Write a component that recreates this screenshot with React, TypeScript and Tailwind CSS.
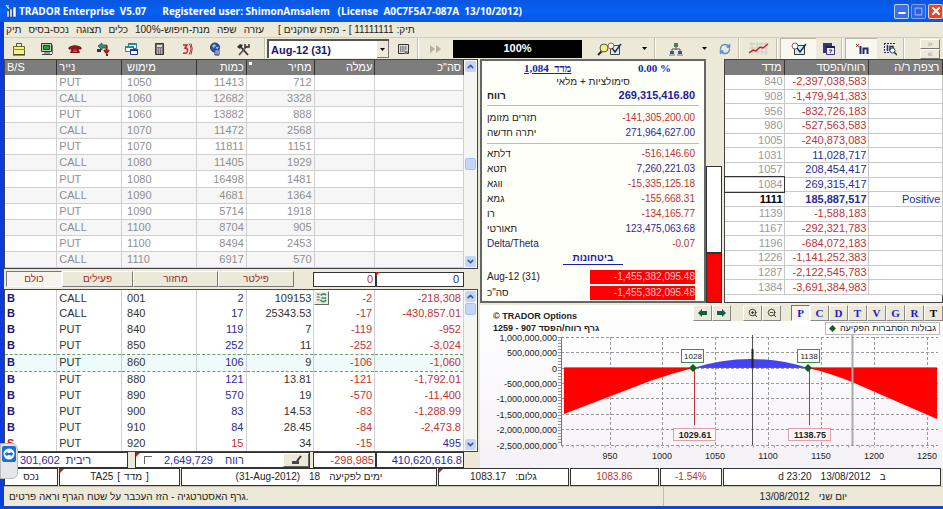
import { useState, type ReactNode } from "react";
import { Minus, Square, X, ZoomIn, ZoomOut, RefreshCw, ChevronUp, ChevronDown } from "lucide-react";

const chain = [
  ["PUT", "1050", "11413", "712"],
  ["CALL", "1060", "12682", "3328"],
  ["PUT", "1060", "13882", "888"],
  ["CALL", "1070", "11472", "2568"],
  ["PUT", "1070", "11811", "1151"],
  ["CALL", "1080", "11405", "1929"],
  ["PUT", "1080", "16498", "1481"],
  ["CALL", "1090", "4681", "1364"],
  ["PUT", "1090", "5714", "1918"],
  ["CALL", "1100", "8704", "905"],
  ["PUT", "1100", "8494", "2453"],
  ["CALL", "1110", "6917", "570"],
];

const positions = [
  ["B", "CALL", "001", "2", "109153", "-2", "-218,308"],
  ["B", "CALL", "840", "17", "25343.53", "-17", "-430,857.01"],
  ["B", "PUT", "840", "119", "7", "-119", "-952"],
  ["B", "PUT", "850", "252", "11", "-252", "-3,024"],
  ["B", "PUT", "860", "106", "9", "-106", "-1,060"],
  ["B", "PUT", "880", "121", "13.81", "-121", "-1,792.01"],
  ["B", "PUT", "890", "570", "19", "-570", "-11,400"],
  ["B", "PUT", "900", "83", "14.53", "-83", "-1,288.99"],
  ["B", "PUT", "910", "84", "28.45", "-84", "-2,473.8"],
  ["S", "PUT", "920", "15", "34", "-15", "495"],
];

const profit = [
  ["840", "-2,397,038,583"],
  ["908", "-1,479,941,383"],
  ["956", "-832,726,183"],
  ["980", "-527,563,583"],
  ["1005", "-240,873,083"],
  ["1031", "11,028,717"],
  ["1057", "208,454,417"],
  ["1084", "269,315,417"],
  ["1111", "185,887,517"],
  ["1139", "-1,588,183"],
  ["1167", "-292,321,783"],
  ["1196", "-684,072,183"],
  ["1226", "-1,141,252,383"],
  ["1287", "-2,122,545,783"],
  ["1384", "-3,691,384,983"],
];

const greeks = [
  ["דלתא", "-516,146.60"],
  ["תטא", "7,260,221.03"],
  ["ווגא", "-15,335,125.18"],
  ["גמא", "-155,668.31"],
  ["רו", "-134,165.77"],
  ["תאורטי", "123,475,063.68"],
  ["Delta/Theta", "-0.07"],
];

const menu = ["תיק", "נכס-בסיס", "תצוגה", "כלים", "מנת-חיפוש-100%", "שפה", "עזרה"];
const tabs = [
  { name: "כולם", width: "w-[56px]" },
  { name: "פעילים", width: "w-[71px]" },
  { name: "מחזור", width: "w-[85px]" },
  { name: "פילטר", width: "w-[76px]" },
];
const modes = ["P", "C", "D", "T", "V", "G", "R", "T"];

const tone = (value: string) => (value.startsWith("-") ? "text-[#c03434]" : "text-[#2a2a98]");

function Icon({ children, wide }: { children: ReactNode; wide?: boolean }) {
  return (
    <svg className={wide ? "h-[14px] w-[26px]" : "h-[14px] w-[14px]"} viewBox={wide ? "0 0 26 14" : "0 0 14 14"} fill="none" aria-hidden="true">
      {children}
    </svg>
  );
}

const tools = [
  {
    label: "Portfolio",
    art: (
      <>
        <path d="M4.500 4V1.500h5V4" stroke="#55551a" />
        <path d="M1.500 4.500h11v8h-11z" fill="#f4f08a" stroke="#66661e" />
        <path d="M1 7.500h12" stroke="#8c8a28" />
        <path d="M1 13h12" stroke="#333" />
      </>
    ),
  },
  {
    label: "Monitor",
    art: (
      <>
        <path d="M1.500 1.500h10v8h-10z" fill="#c6cbb8" stroke="#333" />
        <path d="M3.500 3.500h6v4h-6z" fill="#1fa53c" stroke="#174d22" />
        <path d="M4 11h6M2 12.500h10" stroke="#444" />
        <path d="M12.500 3v9" stroke="#777" />
      </>
    ),
  },
  {
    label: "Phone",
    art: (
      <>
        <path d="M1 7V5.500Q7 2 13 5.500V7h-3V6H4v1z" fill="#b81818" stroke="#6c0c0c" />
        <path d="M4 6h6l2 5H2z" fill="#8c1616" />
        <path d="M5.500 8h3M5 9.500h4" stroke="#c96060" />
      </>
    ),
  },
  {
    label: "Transfer",
    art: (
      <>
        <path d="M2 4l4-3v2h5v3H6v2z" fill="#2f9a86" stroke="#173f39" strokeWidth=".7" />
        <path d="M10.500 4v6M8 8l2.500 3L13 8" stroke="#a51c1c" strokeWidth="2" />
        <path d="M1 7h4v3H1z" fill="#333" />
        <path d="M10 12h2v2h-2z" fill="#333" />
      </>
    ),
  },
  {
    label: "Windows",
    art: (
      <>
        <path d="M4.500 1.500h8v5h-8z" fill="#fff" stroke="#258a9e" />
        <path d="M4 1h9v2H4z" fill="#258a9e" />
        <path d="M1.500 4.500h8v5h-8z" fill="#fff" stroke="#258a9e" />
        <path d="M1 4h9v2H1z" fill="#258a9e" />
        <path d="M6.500 7.500h7v5h-7z" fill="#fff" stroke="#22399c" />
        <path d="M6 7h8v2H6z" fill="#22399c" />
      </>
    ),
  },
  {
    label: "Calculator",
    art: (
      <>
        <path d="M3.500 1.500h8v11h-8z" fill="#777" stroke="#333" />
        <path d="M5 3h5v2H5z" fill="#ddd" />
        <path d="M5 7h5M5 9h5M5 11h5" stroke="#eee" strokeDasharray="1 1" />
      </>
    ),
  },
  {
    label: "Quotes",
    art: (
      <>
        <path d="M3 3h4L5 6q3 0 2.500 3T3 11" stroke="#cc2222" strokeWidth="1.500" />
        <path d="M9 1.500q4 5 0 11M11 1.500q2.500 5 0 11" stroke="#b32c2c" />
      </>
    ),
  },
  {
    label: "Internet",
    art: (
      <>
        <circle cx="7" cy="5.500" r="4.500" fill="#2d55b5" stroke="#1a2f66" />
        <path d="M4 4q2-3 4-1L6 6zM8 5h3L9 8z" fill="#9bd0a0" />
        <path d="M7 8h4v5H7z" fill="#fff" stroke="#2b2b77" />
        <path d="M9 9v4" stroke="#2b2b77" />
      </>
    ),
  },
  {
    label: "Settings",
    art: (
      <>
        <path d="M4 4l8 9" stroke="#333" strokeWidth="1.800" />
        <path d="M11 4l-8 9" stroke="#555" strokeWidth="1.800" />
        <path d="M1 5l3-3 3 1-3 4z" fill="#333" />
        <path d="M9 2v3h4V2" stroke="#333" strokeWidth="1.500" />
      </>
    ),
  },
];

function ToolButton({ label, children, className = "w-7" }: { label: string; children: ReactNode; className?: string }) {
  return (
    <button aria-label={label} className={`flex h-full shrink-0 items-center justify-center ${className}`}>
      {children}
    </button>
  );
}

function Separator() {
  return <div className="h-full w-[2px] shrink-0 border-l border-[#c3bfae] bg-white" />;
}

function Caret() {
  return (
    <svg className="h-[3px] w-[5px]" viewBox="0 0 5 3" aria-hidden="true">
      <path d="M0 0h5L2.500 3z" fill="#000" />
    </svg>
  );
}

function ScrollBar({ thumb }: { thumb: string }) {
  return (
    <div className="flex w-[13px] shrink-0 flex-col items-center bg-[#f5f5f2] py-px">
      <button aria-label="Scroll up" className="flex h-[11px] w-[11px] items-center justify-center rounded-xs bg-[#c3d5fd]">
        <ChevronUp size={9} strokeWidth={4} color="#3d5794" />
      </button>
      <div className={thumb} />
      <div className="h-[12px] w-[11px] rounded-xs border border-[#a9c1f3] bg-[#c3d5fd]" />
      <div className="flex-1" />
      <button aria-label="Scroll down" className="flex h-[11px] w-[11px] items-center justify-center rounded-xs bg-[#c3d5fd]">
        <ChevronDown size={9} strokeWidth={4} color="#3d5794" />
      </button>
    </div>
  );
}

function LeftColumns() {
  return (
    <colgroup>
      <col className="w-[52px]" />
      <col className="w-[65px]" />
      <col className="w-[75px]" />
      <col className="w-[50px]" />
      <col className="w-[68px]" />
      <col className="w-[61px]" />
      <col className="w-[89px]" />
    </colgroup>
  );
}

function Corner() {
  return <span className="absolute left-0 top-0 border-2 border-b-transparent border-l-[#c22] border-r-transparent border-t-[#c22]" />;
}

function TitleBar() {
  return (
    <header className="flex h-[22px] shrink-0 items-center bg-gradient-to-b from-[#0a56e0] via-[#0560f5] to-[#0458e8] pl-[5px] text-white">
      <svg className="h-[14px] w-[12px]" viewBox="0 0 12 14" aria-hidden="true">
        <path d="M1 1l3 4M3 1v3" stroke="#ff8" />
        <path d="M2 13V7h2v6zM5 13V5h2v8zM8 13V3h3v10z" fill="#fff" stroke="#335" strokeWidth=".5" />
      </svg>
      <h1 className="flex gap-4 whitespace-pre pl-[2px] font-['Open_Sans',sans-serif] text-[10px] font-bold">
        <span>TRADOR Enterprise  V5.07</span>
        <span>Registered user: ShimonAmsalem   (License  A0C7F5A7-087A  13/10/2012)</span>
      </h1>
      <div className="ml-auto flex gap-[2px]">
        <button aria-label="Minimize" className="flex h-[15px] w-[15px] items-end justify-center rounded-xs border border-white/70 bg-[#3a6df0]">
          <Minus size={10} strokeWidth={5} />
        </button>
        <button aria-label="Maximize" className="flex h-[15px] w-[15px] items-center justify-center rounded-xs border border-white/40 bg-[#2a62e8] text-white/50">
          <Square size={9} strokeWidth={3} />
        </button>
        <button aria-label="Close" className="flex h-[15px] w-[15px] items-center justify-center rounded-xs border border-white/70 bg-[#e0492a]">
          <X size={12} strokeWidth={4} />
        </button>
      </div>
    </header>
  );
}

function Toolbar() {
  return (
    <div className="flex h-[22px] shrink-0 items-center border-t border-[#d0ccbb] pl-px">
      {tools.map((tool) => (
        <ToolButton key={tool.label} label={tool.label}>
          <Icon>{tool.art}</Icon>
        </ToolButton>
      ))}
      <div className="w-[7px]" />
      <Separator />
      <div className="relative ml-px h-[19px] w-[122px] shrink-0 border-l-2 border-t-2 border-[#555] bg-white">
        <select aria-label="Expiry" className="block h-full w-full appearance-none pl-[2px] text-[11px] font-bold leading-[16px] text-[#16166e] outline-none">
          <option>Aug-12 (31)</option>
          <option>Sep-12 (28)</option>
        </select>
        <span className="pointer-events-none absolute right-0 top-0 flex h-full w-[12px] items-center justify-center border-b border-r border-[#777] bg-[#ece9d8]">
          <Caret />
        </span>
      </div>
      <ToolButton label="Calendar">
        <Icon>
          <path d="M2.500 2.500h10v9h-10z" fill="#ddd" stroke="#333" />
          <path d="M4 5h7M4 7h7M4 9h5" stroke="#333" strokeDasharray="1.500 .7" />
          <path d="M9 9h3l-1 3H8z" fill="#876" />
        </Icon>
      </ToolButton>
      <Separator />
      <ToolButton label="Run" className="w-[31px]">
        <Icon>
          <path d="M2 3l5 4-5 4zM8 3l5 4-5 4z" fill="#b4b09f" />
        </Icon>
      </ToolButton>
      <div className="mx-[3px] flex h-[18px] min-w-0 flex-1 items-center justify-center bg-black text-[11px] font-bold text-white">100%</div>
      <ToolButton label="Find orders" className="w-[50px]">
        <Icon wide>
          <path d="M1 13l4-4" stroke="#222" strokeWidth="2" />
          <circle cx="7" cy="6" r="4" fill="#f5ee78" stroke="#555" />
          <path d="M13.500 3.500h9v9h-9z" fill="#d8f0ef" stroke="#444" />
          <circle cx="14" cy="4" r="3" fill="#fff" stroke="#b55" />
          <path d="M15 6l3 4 6-8" stroke="#1c2f4a" strokeWidth="1.500" />
        </Icon>
      </ToolButton>
      <ToolButton label="Find options" className="w-[19px]"><Caret /></ToolButton>
      <Separator />
      <ToolButton label="Network" className="w-[40px]">
        <Icon>
          <path d="M5 1h4v4H5z" fill="#575" />
          <path d="M7 5v3M3 9V7h8v2" stroke="#555" />
          <path d="M1 9h4v3H1zM9 9h4v3H9z" fill="#35549d" />
          <path d="M0 13h6M8 13h6" stroke="#777" />
        </Icon>
      </ToolButton>
      <ToolButton label="Network options" className="w-[16px]"><Caret /></ToolButton>
      <ToolButton label="Refresh" className="w-[26px]">
        <RefreshCw size={12} strokeWidth={3} color="#5c8bd0" />
      </ToolButton>
      <Separator />
      <ToolButton label="Chart" className="w-[36px]">
        <Icon wide>
          <path d="M4 2h19M4 6h19M4 10h19M7 0v13M12 0v13M17 0v13M21 0v13" stroke="#ccc9c4" />
          <path d="M4 11l4-3 3 1 4-4 3 1 5-4" stroke="#c11f2c" strokeWidth="1.500" />
        </Icon>
      </ToolButton>
      <Separator />
      <ToolButton label="Orders" className="ml-[2px] w-[36px] border-l border-t border-[#b9b5a5] bg-[#f8f7f1]">
        <Icon wide>
          <path d="M8.500 3.500h10v9h-10z" fill="#d8f0ef" stroke="#333" />
          <circle cx="9" cy="4" r="3" fill="#fff" stroke="#956" />
          <path d="M11 6l3 4 6-8" stroke="#1c2f4a" strokeWidth="1.500" />
        </Icon>
      </ToolButton>
      <ToolButton label="Copy window" className="w-[25px]">
        <Icon>
          <path d="M1 1h9v10H1z" fill="#353577" />
          <path d="M4.500 4.500h8v8h-8z" fill="#eef" stroke="#353577" />
          <path d="M4 4h9v2H4z" fill="#20204f" />
          <path d="M7 8h3l-2 3" stroke="#353577" />
        </Icon>
      </ToolButton>
      <Separator />
      <ToolButton label="Logarithm" className="ml-[2px] w-[32px] border-l border-t border-[#b9b5a5] bg-[#f8f7f1]">
        <Icon>
          <path d="M1 2l3 3M4 2L1 5" stroke="#733" />
          <path d="M5.500 4v8M8.500 12V6.500h4V12" stroke="#27276e" strokeWidth="2" />
        </Icon>
      </ToolButton>
      <ToolButton label="Inspect" className="w-[26px]">
        <Icon>
          <path d="M1 1.500h11M1.500 1v9M1 10.500h6" stroke="#27276e" strokeDasharray="2 1" />
          <path d="M4.500 3v6M7 9V4.500h3V7" stroke="#27276e" strokeWidth="1.500" />
          <circle cx="9.500" cy="8.500" r="2.500" fill="#dff" stroke="#444" />
          <path d="M11 10l3 3" stroke="#333" strokeWidth="1.500" />
        </Icon>
      </ToolButton>
      <Separator />
      <div className="ml-[15px] mr-[3px] flex shrink-0 flex-col">
        <button aria-label="More" className="h-[10px] w-[20px] border border-b-[#777] border-l-white border-r-[#777] border-t-white text-[9px] leading-[6px] text-[#999]">»</button>
        <button aria-label="Less" className="h-[10px] w-[20px] border border-b-[#777] border-l-white border-r-[#777] border-t-white text-[9px] leading-[6px] text-[#999]">«</button>
      </div>
    </div>
  );
}

function ChainTable() {
  return (
    <section className="flex min-h-0 flex-[211] border border-[#444] bg-white">
      <table className="h-full min-w-0 flex-1 table-fixed border-collapse text-[11px] leading-none text-[#8f8f8f]">
        <LeftColumns />
        <thead>
          <tr className="h-[15px] bg-[#7d7d7d] text-white [&>th]:border-r [&>th]:border-[#333] [&>th]:px-[2px] [&>th]:font-normal">
            <th className="text-left">B/S</th>
            <th className="text-left">נייר</th>
            <th className="pl-[5px]! text-left">מימוש</th>
            <th className="text-right">כמות</th>
            <th className="relative text-right">
              <span className="absolute left-[2px] top-[2px] h-[3px] w-[3px] bg-white" />
              מחיר
            </th>
            <th className="text-right">עמלה</th>
            <th className="text-right">סה"כ</th>
          </tr>
        </thead>
        <tbody>
          {chain.map(([type, strike, qty, price], i) => (
            <tr key={i} className="border-b border-[#cfcfcf] even:bg-[#f6f6f6] [&>td]:border-r [&>td]:border-[#cfcfcf] [&>td]:px-[2px]">
              <td />
              <td>{type}</td>
              <td className="pl-[5px]!">{strike}</td>
              <td className="text-right">{qty}</td>
              <td className="text-right">{price}</td>
              <td />
              <td />
            </tr>
          ))}
        </tbody>
      </table>
      <ScrollBar thumb="flex-[1]" />
    </section>
  );
}

function FilterBar() {
  const [active, setActive] = useState("כולם");
  return (
    <div className="flex h-[20px] shrink-0 items-center pl-[2px] pr-[14px]">
      {tabs.map((tab) => (
        <button
          key={tab.name}
          onClick={() => setActive(tab.name)}
          className={`h-[16px] border text-[10px] leading-none text-[#a02828] ${tab.width} ${
            tab.name === active
              ? "border-b-white border-l-[#777] border-r-white border-t-[#777] bg-[#f6f4ec]"
              : "border-b-[#777] border-l-white border-r-[#777] border-t-white"
          }`}
        >
          {tab.name}
        </button>
      ))}
      <input aria-label="Total commission" readOnly value="0" className="ml-auto h-[15px] w-[63px] border border-[#333] bg-white px-[2px] text-right text-[11px] leading-none text-[#c03434]" />
      <div className="relative">
        <Corner />
        <input aria-label="Total amount" readOnly value="0" className="block h-[15px] w-[88px] border border-[#333] bg-white px-[4px] text-right text-[11px] leading-none text-[#2a2a98]" />
      </div>
    </div>
  );
}

function PositionTable() {
  return (
    <section className="flex min-h-0 flex-[163] border border-[#444] bg-white">
      <table className="h-full min-w-0 flex-1 table-fixed border-collapse text-[11px] leading-none text-[#333]">
        <LeftColumns />
        <tbody>
          {positions.map(([side, type, strike, qty, price, fee, total], i) => (
            <tr
              key={i}
              className={`[&>td]:border-r [&>td]:border-[#cfcfcf] [&>td]:px-[2px] ${
                i === 4 ? "border-y border-dashed border-[#6f9a6f] bg-[#effafa]" : ""
              }`}
            >
              <td className={`font-bold ${side === "S" ? "text-[#d02020]" : "text-[#16167c]"}`}>{side}</td>
              <td>{type}</td>
              <td className="pl-[5px]!">{strike}</td>
              <td className={`text-right ${side === "S" ? "text-[#c03434]" : "text-[#2a2a98]"}`}>{qty}</td>
              <td className="relative text-right">
                {price}
                {i === 0 && (
                  <button aria-label="Edit price" className="absolute -right-[16px] top-px flex h-[14px] w-[15px] items-center justify-center border border-b-[#666] border-l-white border-r-[#666] border-t-white bg-[#ece9d8]">
                    <Icon>
                      <path d="M2 3h3M2 6h3M2 9h3" stroke="#555" />
                      <path d="M6 4q4-3 6 0M12 9q-3 4-6 0M7 7h5" stroke="#2a9478" strokeWidth="1.800" />
                    </Icon>
                  </button>
                )}
              </td>
              <td className={`text-right ${tone(fee)}`}>{fee}</td>
              <td className={`text-right ${tone(total)}`}>{total}</td>
            </tr>
          ))}
        </tbody>
      </table>
      <ScrollBar thumb="h-px" />
    </section>
  );
}

function TotalsBar() {
  return (
    <div className="flex h-[16px] shrink-0 items-stretch pr-[14px] text-[11px] leading-[14px] text-[#2a2a98] [&>div]:border [&>div]:border-[#333] [&>div]:bg-white">
      <div className="flex w-[124px] items-center gap-[6px] pl-[15px]">
        <span>301,602</span>
        <span>ריבית</span>
      </div>
      <div className="relative ml-[7px] flex min-w-0 flex-1 items-center pl-[8px]">
        <Corner />
        <input type="checkbox" aria-label="רווח" className="h-[8px] w-[8px] appearance-none border-l border-t border-[#666] bg-white" />
        <span className="ml-[12px]">2,649,729</span>
        <span className="ml-[12px]">רווח</span>
        <button aria-label="Edit" className="ml-auto flex h-full w-[26px] items-center justify-center border border-b-[#666] border-l-white border-r-[#666] border-t-white bg-[#ece9d8]">
          <Icon>
            <path d="M12 3L8 8" stroke="#333" strokeWidth="2" />
            <path d="M3 8h7v3H3z" fill="#445" />
          </Icon>
        </button>
      </div>
      <div className="ml-[3px] w-[63px] px-px text-right text-[#c03434]">-298,985</div>
      <div className="w-[88px] px-px text-right">410,620,616.8</div>
    </div>
  );
}

function Summary() {
  return (
    <section className="flex min-w-0 flex-[212] flex-col border-2 border-[#666] bg-[#fffffa] px-[5px] text-[10px] leading-[15px] text-[#222]">
      <div className="flex h-[14px] items-center justify-between pl-[37px] pr-[28px] font-['Liberation_Serif',serif] text-[11px] font-bold text-[#1c1ca8]">
        <a href="#index" className="whitespace-pre underline">
          1,084  <bdi>מדד</bdi>
        </a>
        <span>0.00 %</span>
      </div>
      <p className="text-center leading-[13px]" dir="rtl">סימולציות + מלאי</p>
      <div className="flex justify-between border-b border-[#bbb] pb-[2px] pr-[4px] font-bold">
        <span>רווח</span>
        <span className="text-[11px] text-[#1c1ca8]">269,315,416.80</span>
      </div>
      <div className="flex flex-col border-b border-[#bbb] pb-[3px] pr-[4px] pt-[4px]">
        <div className="flex justify-between">
          <span>תזרים מזומן</span>
          <span className="text-[#c03434]">-141,305,200.00</span>
        </div>
        <div className="flex justify-between">
          <span>יתרה חדשה</span>
          <span className="text-[#2a2a98]">271,964,627.00</span>
        </div>
      </div>
      <div className="flex flex-1 flex-col justify-around pr-[4px] pt-[2px]">
        {greeks.map(([name, value]) => (
          <div key={name} className="flex justify-between">
            <span className={name === "Delta/Theta" ? "text-[#22226a]" : ""}>{name}</span>
            <span className={tone(value)}>{value}</span>
          </div>
        ))}
      </div>
      <h2 className="mx-auto w-[60px] border-b border-[#1c1ca8] text-center font-bold leading-[13px] text-[#1c1ca8]">ביטחונות</h2>
      <div className="flex flex-col gap-px pb-[3px] pr-[4px] pt-[4px]">
        {["Aug-12 (31)", "סה\"כ"].map((name) => (
          <div key={name} className="flex items-center justify-between">
            <span>{name}</span>
            <span className="h-[14px] w-[105px] bg-[#f00] text-right leading-[14px] text-[#ffd0d0]">-1,455,382,095.48</span>
          </div>
        ))}
      </div>
    </section>
  );
}

function ProfitTable() {
  return (
    <section className="min-w-0 flex-[217] border border-[#444] bg-white pb-[7px]">
      <table className="h-full w-full table-fixed border-collapse text-[11px] leading-none">
        <colgroup>
          <col className="w-[59px]" />
          <col className="w-[84px]" />
          <col className="w-[74px]" />
        </colgroup>
        <thead>
          <tr className="h-[15px] bg-[#7d7d7d] text-white [&>th]:border-r [&>th]:border-[#333] [&>th]:px-[2px] [&>th]:text-right [&>th]:font-normal">
            <th>מדד</th>
            <th>רווח/הפסד</th>
            <th>רצפת ר/ה</th>
          </tr>
        </thead>
        <tbody>
          {profit.map(([index, value]) => (
            <tr key={index} className={`border-b border-[#c8c8c8] text-right [&>td]:border-r [&>td]:border-[#c8c8c8] [&>td]:px-px ${index === "1111" ? "font-bold" : ""}`}>
              <td className={index === "1111" ? "text-black" : index === "1084" ? "text-[#999] outline outline-[#333]" : "text-[#999]"}>{index}</td>
              <td className={tone(value)}>{value}</td>
              <td className="font-normal text-[#2a2a98]">{index === "1111" ? "Positive" : ""}</td>
            </tr>
          ))}
        </tbody>
      </table>
    </section>
  );
}

const gridRows = [3, 18, 34, 49, 64, 80, 95, 111];
const rowLabels = ["1,000,000,000", "500,000,000", "0", "-500,000,000", "-1,000,000,000", "-1,500,000,000", "-2,000,000,000", "-2,500,000,000"];
const gridCols = [130, 182, 235, 288, 341, 394, 447];

function ProfitChart() {
  return (
    <svg className="min-h-0 w-full flex-1 overflow-visible" viewBox="0 0 463 132" preserveAspectRatio="xMidYMin meet" fontFamily="Liberation Sans, sans-serif" fill="none" role="img" aria-label="Profit and loss">
      {gridRows.map((y, i) => (
        <g key={y}>
          <path d={`M81 ${y + 0.5}H458`} stroke="#999" strokeDasharray="3 2" />
          <text x="77" y={y + 4} textAnchor="end" fontSize="9" fill="#222">{rowLabels[i]}</text>
        </g>
      ))}
      {gridCols.map((x, i) => (
        <g key={x}>
          <path d={`M${x + 0.5} 3V114`} stroke="#999" strokeDasharray="3 2" />
          <text x={x} y="125" textAnchor="middle" fontSize="9" fill="#222">{950 + i * 50}</text>
        </g>
      ))}
      <path d="M79.500 3V111" stroke="#999" strokeWidth="3" strokeDasharray="1 2" />
      <path d="M81.500 3V111.500" stroke="#777" />
      <path d="M82 112.500H458" stroke="#999" strokeWidth="2" strokeDasharray="1 9.600" />
      <path d="M84 34V80L131 62L170 47Q190 40 213 34z" fill="#f00" />
      <path d="M213 34Q271 16 328 34z" fill="#4343f2" />
      <path d="M328 34H457V85L372 48Q350 39 328 34z" fill="#f00" />
      <path d="M84 33.500H457" stroke="#c33" strokeWidth=".7" />
      <path d="M272.500 1V111" stroke="#555" />
      <path d="M272.500 15V34" stroke="#223" strokeWidth="2" />
      <path d="M372.500 1V111" stroke="#aaa" strokeWidth="2" />
      <path d="M214.500 36V91M329.500 36V91" stroke="#c22f3f" />
      <path d="M213 30l4 4-4 4-4-4zM328 30l4 4-4 4-4-4z" fill="#165a22" />
      {[["1028", 201], ["1138", 317]].map(([label, x]) => (
        <g key={label}>
          <rect x={Number(x) + 0.5} y="15.500" width="22" height="13" fill="#fff" stroke="#3c8c4c" />
          <text x={Number(x) + 12} y="25" textAnchor="middle" fontSize="8" fill="#222">{label}</text>
        </g>
      ))}
      {[["1029.61", 193], ["1138.75", 308]].map(([label, x]) => (
        <g key={label}>
          <rect x={Number(x) + 0.5} y="94.500" width="42" height="12" fill="#fff8f8" stroke="#e3a0aa" />
          <text x={Number(x) + 22} y="104" textAnchor="middle" fontSize="9" fontWeight="bold" fill="#222">{label}</text>
        </g>
      ))}
    </svg>
  );
}

const raised = "flex h-[16px] w-[19px] items-center justify-center border border-b-[#888] border-l-white border-r-[#888] border-t-white bg-[#ece9d8]";

function GraphPanel() {
  const [mode, setMode] = useState(0);
  return (
    <section className="flex min-h-0 flex-[163] flex-col bg-gradient-to-b from-white to-[#f5f2f7]">
      <div className="flex h-[29px] shrink-0 justify-between">
        <div className="pl-[13px] pt-[5px] text-[9px] font-bold leading-[12px] text-[#222]">
          <p>© TRADOR Options</p>
          <p dir="ltr">1259 - 907 <bdi>גרף רווח/הפסד</bdi></p>
        </div>
        <div className="flex flex-col items-end">
          <div className="flex bg-[#ece9d8]">
            <button aria-label="Previous" className={raised}>
              <svg className="h-[8px] w-[9px]" viewBox="0 0 9 8"><path d="M0 4l4-4v2h5v4H4v2z" fill="#145d4c" /></svg>
            </button>
            <button aria-label="Next" className={raised}>
              <svg className="h-[8px] w-[9px]" viewBox="0 0 9 8"><path d="M9 4L5 0v2H0v4h5v2z" fill="#145d4c" /></svg>
            </button>
            <div className="w-[12px]" />
            <button aria-label="Zoom in" className={raised}><ZoomIn size={10} color="#222" /></button>
            <button aria-label="Zoom out" className={raised}><ZoomOut size={10} color="#222" /></button>
            <div className="w-[10px]" />
            {modes.map((name, i) => (
              <button
                key={i}
                onClick={() => setMode(i)}
                className={`h-[16px] w-[19px] border font-['Liberation_Serif',serif] text-[11px] font-bold leading-none ${i === 7 ? "text-black" : "text-[#1c1cc8]"} ${
                  i === mode ? "border-b-white border-l-[#777] border-r-white border-t-[#777] bg-[#f6f4ec]" : "border-b-[#888] border-l-white border-r-[#888] border-t-white"
                }`}
              >
                {name}
              </button>
            ))}
          </div>
          <div className="mr-[3px] mt-px flex h-[13px] shrink-0 items-center gap-[4px] border border-[#bbb] bg-white px-[3px] text-[9px] leading-none text-[#222]">
            <svg className="h-[7px] w-[7px]" viewBox="0 0 7 7" aria-hidden="true"><path d="M3.500 0L7 3.500 3.500 7 0 3.500z" fill="#165a22" /></svg>
            <span>גבולות הסתברות הפקיעה</span>
          </div>
        </div>
      </div>
      <ProfitChart />
    </section>
  );
}

function InfoBar() {
  return (
    <div className="flex h-[18px] shrink-0 gap-px pr-[2px] text-[10px] leading-none text-[#222] [&>div]:flex [&>div]:items-center [&>div]:justify-center [&>div]:gap-[9px] [&>div]:border [&>div]:border-[#333] [&>div]:bg-white">
      <div className="w-[54px]">נכס</div>
      <div className="relative w-[121px] gap-[4px]!">
        <Corner />
        <span>TA25</span><span>[</span><span>מדד</span><span>]</span>
      </div>
      <div className="min-w-0 flex-[256]">
        <span>(31-Aug-2012)</span><span>18</span><span>ימים לפקיעה</span>
      </div>
      <div className="relative w-[131px]">
        <Corner />
        <span>1083.17</span><span dir="rtl">גלום:</span>
      </div>
      <div className="w-[89px] text-[#c03434]">1083.86</div>
      <div className="w-[62px] text-[#c03434]">-1.54%</div>
      <div className="min-w-0 flex-[218]">
        <span>d 23:20</span><span>13/08/2012</span><span>ב</span>
      </div>
    </div>
  );
}

export default function App() {
  return (
    <div className="relative flex h-screen flex-col overflow-hidden border-b-[3px] border-[#1444c8] bg-[#ece9d8] font-['Liberation_Sans',sans-serif]">
      <TitleBar />
      <div className="flex min-h-0 flex-1 flex-col border-l-4 border-[#0b3bdc]">
        <nav className="flex h-[15px] shrink-0 items-center gap-[7px] whitespace-pre pl-[2px] text-[10px] text-[#222]">
          {menu.map((item) => (
            <button key={item} dir="rtl">{item}</button>
          ))}
          <div className="flex gap-[3px] pl-[7px]">
            <span>[</span>
            <span>מפת שחקנים</span>
            <span>-</span>
            <span>[ 11111111</span>
            <span dir="rtl">תיק:</span>
          </div>
        </nav>
        <Toolbar />
        <main className="grid min-h-0 flex-1 grid-cols-[minmax(0,474fr)_minmax(0,463fr)] gap-x-[2px]">
          <div className="flex min-h-0 flex-col">
            <ChainTable />
            <FilterBar />
            <PositionTable />
            <TotalsBar />
          </div>
          <div className="flex min-h-0 flex-col gap-[2px]">
            <div className="flex min-h-0 flex-[244]">
              <Summary />
              <div className="flex w-[16px] shrink-0 flex-col">
                <div className="flex-[109]" />
                <div className="flex-[86] border border-[#333] bg-white" />
                <div className="flex-[49] border border-[#333] bg-[#f00]" />
              </div>
              <div className="w-[2px]" />
              <ProfitTable />
            </div>
            <GraphPanel />
          </div>
        </main>
        <InfoBar />
        <footer className="flex h-[20px] shrink-0 items-center border-t border-[#c3bfae] text-[10px] text-[#222]">
          <p className="flex-[658] pl-[5px]" dir="ltr">גרף האסטרטגיה - הזז העכבר על שטח הגרף וראה פרטים.</p>
          <p className="flex h-full flex-[281] items-center justify-center gap-[9px] border-l border-[#c3bfae]">
            <span>13/08/2012</span>
            <span>יום שני</span>
          </p>
        </footer>
      </div>
      {/* remote support tab */}
      <button aria-label="TeamViewer" className="absolute bottom-[27px] left-0 flex h-[36px] w-[18px] items-start justify-center rounded-r-md border border-[#bbb] bg-[#e4e6ea] pt-[2px]">
        <svg className="h-[16px] w-[14px]" viewBox="0 0 14 16" aria-hidden="true">
          <rect width="14" height="16" rx="2" fill="#1b6fd0" />
          <circle cx="7" cy="8" r="5.500" fill="#fff" />
          <path d="M2.500 8l3-2.500V7h3V5.500l3 2.500-3 2.500V9h-3v1.500z" fill="#1b6fd0" />
        </svg>
      </button>
    </div>
  );
}
